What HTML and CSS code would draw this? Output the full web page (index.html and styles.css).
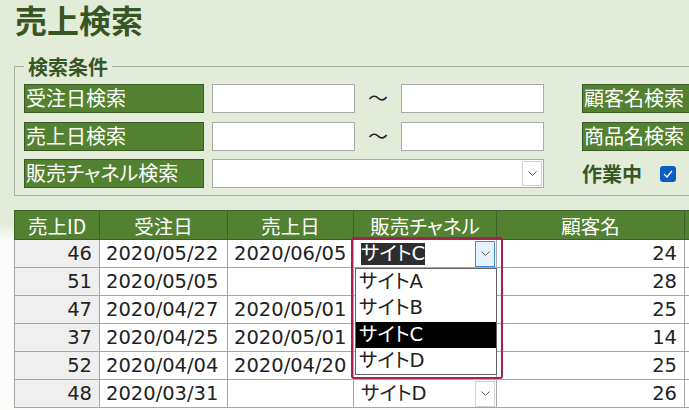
FILE: index.html
```html
<!DOCTYPE html>
<html lang="ja"><head><meta charset="utf-8">
<title>売上検索</title>
<link rel="stylesheet" href="styles.css">
</head>
<body>

<h1 class="title">売上検索</h1>

<fieldset class="filters">
<legend>検索条件</legend>
<div class="frows">
  <div class="frow">
    <div class="label">受注日検索</div>
    <div class="box"></div>
    <div class="tilde">～</div>
    <div class="box"></div>
    <div class="label side">顧客名検索</div>
  </div>
  <div class="frow">
    <div class="label">売上日検索</div>
    <div class="box"></div>
    <div class="tilde">～</div>
    <div class="box"></div>
    <div class="label side">商品名検索</div>
  </div>
  <div class="frow">
    <div class="label">販売チャネル検索</div>
    <div class="box combo">
      <span class="arrow-btn"><svg width="9" height="5" viewBox="0 0 9 5"><polyline points="0.5,0.5 4.5,4.5 8.5,0.5" fill="none" stroke="#555" stroke-width="1"/></svg></span>
    </div>
    <div class="flag">作業中
      <span class="check"><svg width="10" height="8" viewBox="0 0 10 8"><polyline points="1,4 4,7 9,1" fill="none" stroke="#fff" stroke-width="1.4"/></svg></span>
    </div>
  </div>
</div>
</fieldset>

<div class="detail">
<table class="sales">
  <colgroup>
    <col class="c-id"><col class="c-date"><col class="c-date2"><col class="c-ch"><col class="c-cust"><col class="c-rest">
  </colgroup>
  <thead>
    <tr><th>売上ID</th><th>受注日</th><th>売上日</th><th>販売チャネル</th><th>顧客名</th><th></th></tr>
  </thead>
  <tbody>
    <tr>
      <td class="id">46</td><td>2020/05/22</td><td>2020/06/05</td>
      <td class="ch open">
        <div class="cell-combo"><span class="sel">サイトC</span><span class="arrow-btn focus"><svg width="9" height="5" viewBox="0 0 9 5"><polyline points="0.5,0.5 4.5,4.5 8.5,0.5" fill="none" stroke="#555" stroke-width="1"/></svg></span></div>
        <ul class="droplist">
          <li>サイトA</li>
          <li>サイトB</li>
          <li class="hl">サイトC</li>
          <li>サイトD</li>
        </ul>
        <div class="mark"></div>
      </td>
      <td class="num">24</td><td></td>
    </tr>
    <!-- channel cells under the open list are covered, left blank -->
    <tr><td class="id">51</td><td>2020/05/05</td><td></td><td class="ch"></td><td class="num">28</td><td></td></tr>
    <tr><td class="id">47</td><td>2020/04/27</td><td>2020/05/01</td><td class="ch"></td><td class="num">25</td><td></td></tr>
    <tr><td class="id">37</td><td>2020/04/25</td><td>2020/05/01</td><td class="ch"></td><td class="num">14</td><td></td></tr>
    <tr><td class="id">52</td><td>2020/04/04</td><td>2020/04/20</td><td class="ch"></td><td class="num">25</td><td></td></tr>
    <tr>
      <td class="id">48</td><td>2020/03/31</td><td></td>
      <td class="ch"><div class="cell-combo"><span>サイトD</span><span class="arrow-btn"><svg width="9" height="5" viewBox="0 0 9 5"><polyline points="0.5,0.5 4.5,4.5 8.5,0.5" fill="none" stroke="#555" stroke-width="1"/></svg></span></div></td>
      <td class="num">26</td><td></td>
    </tr>
  </tbody>
</table>
</div>

</body></html>
```

FILE: styles.css
```css
* {box-sizing:border-box;}
html, body {margin:0;padding:0;}
body {width:689px;height:410px;overflow:hidden;background:#e2ecd9;font-family:"DejaVu Sans","Noto Sans CJK JP",sans-serif;color:#222;}

.title {margin:0;padding-left:15px;font-family:"Noto Sans CJK JP",sans-serif;font-size:32px;line-height:38px;font-weight:bold;color:#375623;}

.filters {margin:17px -40px 0 14px;padding:6px 0 7px 9px;border:1px solid #aab3a3;border-right:0;}
.filters legend {padding:0 4px;font-family:"Noto Sans CJK JP",sans-serif;font-size:20px;line-height:23px;font-weight:bold;color:#375623;}

.frows {display:flex;flex-direction:column;gap:8.5px;}
.frow {display:flex;align-items:stretch;height:29px;}
.label {width:180px;margin-right:8px;padding-left:1px;background:#538132;border:1px solid #3a5a24;color:#fff;font-family:"Noto Sans CJK JP",sans-serif;font-feature-settings:"palt";font-size:20px;line-height:26px;white-space:nowrap;overflow:hidden;}
.label.side {width:140px;margin:0 0 0 38px;}
.box {width:143px;background:#fff;border:1px solid #a9a9a9;}
.tilde {width:46px;text-align:center;font-family:"Noto Sans CJK JP",sans-serif;font-size:20px;line-height:27px;color:#222;}
.combo {width:332px;display:flex;justify-content:flex-end;align-items:stretch;padding:1px;}
.combo .arrow-btn {width:20px;border:1px solid #cfcfcf;}

.flag {margin-left:38px;display:flex;align-items:center;font-family:"Noto Sans CJK JP",sans-serif;font-size:20px;font-weight:bold;color:#375623;}
.check {margin-left:18px;width:16px;height:16px;border-radius:3px;background:#0b5cc4;display:flex;align-items:center;justify-content:center;}

.arrow-btn {display:flex;align-items:center;justify-content:center;background:#fff;}

.detail {margin-top:14px;padding-left:14px;background:linear-gradient(#e2ecd9 0, #e2ecd9 14px, #fbfcfa 30px);height:220px;}

.sales {border-collapse:collapse;table-layout:fixed;width:760px;font-size:19.5px;font-feature-settings:"palt";}
.c-id {width:85px;}
.c-date {width:128px;}
.c-date2 {width:126px;}
.c-ch {width:143px;}
.c-cust {width:188px;}
.c-rest {width:90px;}
.sales th {height:29px;padding:0;background:#538132;color:#fff;font-weight:normal;font-family:"Noto Sans CJK JP",sans-serif;border:1px solid #3e5f28;line-height:27px;text-align:center;}
.sales td {height:28px;padding:0 6px;background:#fff;border:1px solid #a6a6a6;line-height:26px;white-space:nowrap;overflow:visible;}
.sales td.id {background:#efefef;text-align:right;padding-right:7px;}
.sales td.num {text-align:right;padding-right:7px;}
.sales td.ch {padding:0 1px 0 7px;}
.sales td.open {position:relative;}

.cell-combo {display:flex;justify-content:space-between;align-items:center;height:26px;}
.cell-combo .arrow-btn {width:20px;height:26px;border:1px solid #d4d4d4;}
.cell-combo .arrow-btn.focus {background:#e5f1fb;border-color:#3c8ddc;}
.sel {background:#2e2e2e;color:#fff;line-height:22px;}

.droplist {position:absolute;left:1px;top:28px;width:142px;margin:0;padding:0;list-style:none;background:#fff;border:1px solid #646464;z-index:2;}
.droplist li {height:26.25px;line-height:26px;padding-left:3px;}
.droplist li.hl {background:#000;color:#fff;}

.mark {position:absolute;left:-3px;top:-3px;width:152px;height:142px;border:2.5px solid #a3244f;border-radius:3px;z-index:3;}
```
